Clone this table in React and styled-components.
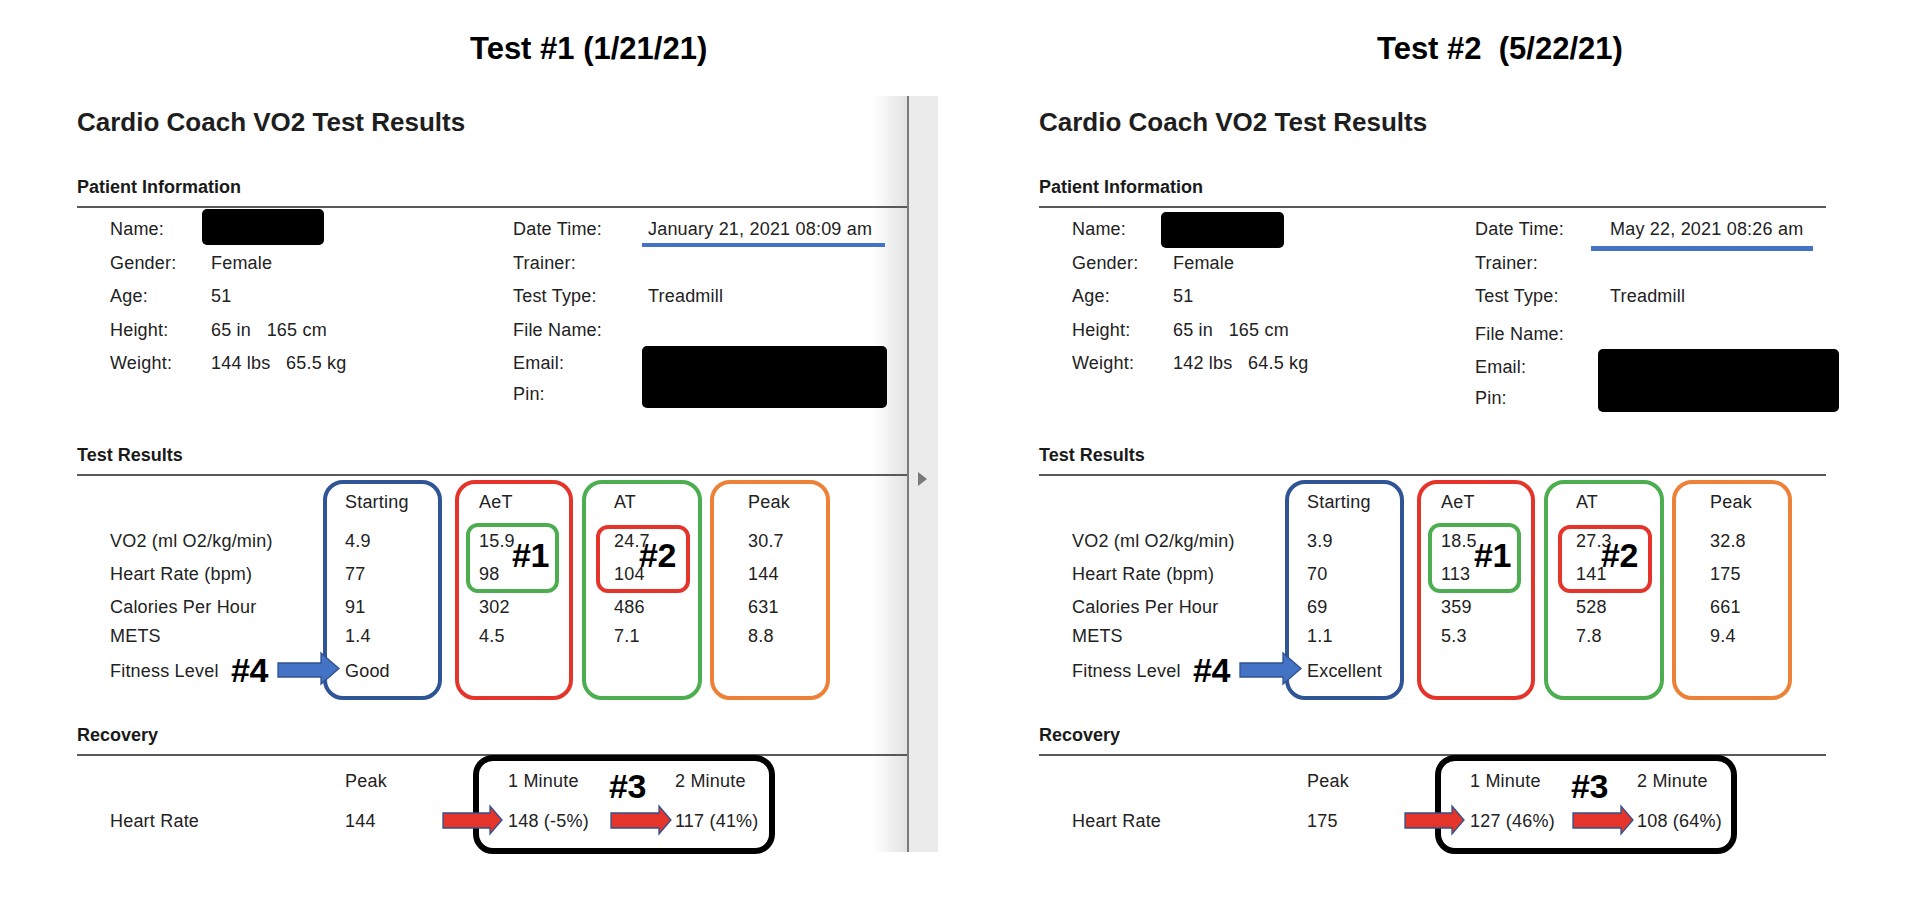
import React from "react";
import styled, { createGlobalStyle } from "styled-components";

const GlobalStyle = createGlobalStyle`
  html, body { margin: 0; padding: 0; background: #fff; }
  body { font-family: "Liberation Sans", Arial, Helvetica, sans-serif; color: #222; }
`;

const COLORS = {
  blue: "#2f5597",
  red: "#e5352b",
  green: "#4cae50",
  orange: "#ec8137",
  arrowBlue: "#4472c4",
  arrowRed: "#e5352b",
  outline: "#2f528f",
};

const ROW_LABELS = ["VO2 (ml O2/kg/min)", "Heart Rate (bpm)", "Calories Per Hour", "METS", "Fitness Level"];
const ROW_HEIGHTS = [39, 33, 33, 29, 35, 20];

const COLUMNS = [
  { key: "Starting", color: COLORS.blue, width: 119, pad: 18, gap: 0 },
  {
    key: "AeT", color: COLORS.red, width: 118, pad: 20, gap: 13,
    highlight: { color: COLORS.green, left: 7, top: 39, width: 93, height: 70, tag: "#1", tagLeft: 53, tagTop: 54 },
  },
  {
    key: "AT", color: COLORS.green, width: 120, pad: 28, gap: 9,
    highlight: { color: COLORS.red, left: 10, top: 41, width: 94, height: 68, tag: "#2", tagLeft: 53, tagTop: 54 },
  },
  { key: "Peak", color: COLORS.orange, width: 120, pad: 34, gap: 8 },
];

const TESTS = [
  {
    id: 1,
    title: "Test #1 (1/21/21)",
    titleIndent: 470,
    inset: 0,
    padLeft: 77,
    width: 830,
    shaded: true,
    scrollbar: true,
    patient: [
      { label: "Name:", redact: { left: -9, top: -4, width: 122, height: 36 } },
      { label: "Gender:", value: "Female" },
      { label: "Age:", value: "51" },
      { label: "Height:", value: "65 in   165 cm" },
      { label: "Weight:", value: "144 lbs   65.5 kg" },
    ],
    session: [
      { label: "Date Time:", value: "January 21, 2021 08:09 am", underline: { left: -6, top: 30, width: 243, height: 4 } },
      { label: "Trainer:" },
      { label: "Test Type:", value: "Treadmill" },
      { label: "File Name:" },
      { label: "Email:", redact: { left: -6, top: -1, width: 245, height: 62 } },
      { label: "Pin:", shift: -2.5 },
    ],
    results: {
      Starting: ["4.9", "77", "91", "1.4", "Good"],
      AeT: ["15.9", "98", "302", "4.5", ""],
      AT: ["24.7", "104", "486", "7.1", ""],
      Peak: ["30.7", "144", "631", "8.8", ""],
    },
    recovery: { peak: "144", one: "148 (-5%)", two: "117 (41%)" },
  },
  {
    id: 2,
    title: "Test #2  (5/22/21)",
    titleIndent: 417,
    inset: 79,
    padLeft: 0,
    width: 787,
    shaded: false,
    scrollbar: false,
    patient: [
      { label: "Name:", redact: { left: -12, top: -1, width: 123, height: 36 } },
      { label: "Gender:", value: "Female" },
      { label: "Age:", value: "51" },
      { label: "Height:", value: "65 in   165 cm" },
      { label: "Weight:", value: "142 lbs   64.5 kg" },
    ],
    session: [
      { label: "Date Time:", value: "May 22, 2021 08:26 am", underline: { left: -19, top: 33, width: 222, height: 5 } },
      { label: "Trainer:" },
      { label: "Test Type:", value: "Treadmill" },
      { label: "File Name:", shift: 4 },
      { label: "Email:", redact: { left: -12, top: -2, width: 241, height: 63 } },
      { label: "Pin:", shift: -2.5 },
    ],
    results: {
      Starting: ["3.9", "70", "69", "1.1", "Excellent"],
      AeT: ["18.5", "113", "359", "5.3", ""],
      AT: ["27.3", "141", "528", "7.8", ""],
      Peak: ["32.8", "175", "661", "9.4", ""],
    },
    recovery: { peak: "175", one: "127 (46%)", two: "108 (64%)" },
  },
];

/* ---------- page frame ---------- */

const Page = styled.main`
  display: flex;
  width: 1920px;
  height: 911px;
  overflow: hidden;
  background: #fff;
`;

const Panel = styled.section`
  flex: none;
  width: 960px;
  display: flex;
  flex-direction: column;
  padding-top: 31px;
  box-sizing: border-box;
`;

const SlideTitle = styled.h1`
  margin: 0 0 0 ${(p) => p.$indent}px;
  font: 700 31px/36px "Liberation Sans", Arial, sans-serif;
  color: #000;
  white-space: pre;
`;

const DocFrame = styled.div`
  display: flex;
  height: 756px;
  margin: 29px 0 0 ${(p) => p.$inset}px;
`;

const Doc = styled.article`
  flex: none;
  width: ${(p) => p.$width}px;
  padding: 11px 0 0 ${(p) => p.$padLeft}px;
  background: ${(p) =>
    p.$shaded ? "linear-gradient(to right, #fff calc(100% - 34px), #e2e2e2)" : "#fff"};
  color: #222;
`;

const ScrollStrip = styled.div`
  flex: none;
  width: 29px;
  border-left: 2px solid #7b7b7b;
  background: #ebebeb;
  padding-top: 376px;
`;

const ScrollArrow = styled.span`
  display: block;
  width: 0;
  height: 0;
  margin-left: 9px;
  border-left: 9px solid #7a7a7a;
  border-top: 7.5px solid transparent;
  border-bottom: 7.5px solid transparent;
`;

/* ---------- document text ---------- */

const DocTitle = styled.h2`
  margin: 0;
  font: 700 26px/30px "Liberation Sans", Arial, sans-serif;
  color: #1e1e1e;
`;

const SectionHeader = styled.h3`
  margin: ${(p) => p.$top}px 0 0;
  padding-bottom: 8px;
  border-bottom: 2px solid #595959;
  font: 700 18px/22px "Liberation Sans", Arial, sans-serif;
  color: #1a1a1a;
`;

const InfoBlock = styled.div`
  display: flex;
  height: 236px;
  box-sizing: border-box;
  padding-top: 5px;
`;

const InfoColumn = styled.div`
  display: flex;
  flex-direction: column;
  box-sizing: border-box;
  width: ${(p) => (p.$width ? `${p.$width}px` : "auto")};
  flex: ${(p) => (p.$width ? "none" : "1")};
  padding-left: ${(p) => p.$pad || 0}px;
`;

const InfoRow = styled.div`
  display: flex;
  height: 33.5px;
  line-height: 33.5px;
  margin-top: ${(p) => p.$shift || 0}px;
  font-size: 18px;
  letter-spacing: 0.2px;
`;

const InfoLabel = styled.span`
  flex: none;
  width: ${(p) => p.$width}px;
`;

const InfoValue = styled.span`
  position: relative;
  flex: 1;
  white-space: pre;
`;

const Redaction = styled.span`
  position: absolute;
  left: ${(p) => p.$left}px;
  top: ${(p) => p.$top}px;
  width: ${(p) => p.$width}px;
  height: ${(p) => p.$height}px;
  background: #000;
  border-radius: 5px;
`;

const DateUnderline = styled.span`
  position: absolute;
  left: ${(p) => p.$left}px;
  top: ${(p) => p.$top}px;
  width: ${(p) => p.$width}px;
  height: ${(p) => p.$height}px;
  background: ${COLORS.arrowBlue};
`;

/* ---------- results table ---------- */

const ResultsTable = styled.div`
  display: flex;
  align-items: flex-start;
`;

const LabelColumn = styled.div`
  flex: none;
  box-sizing: border-box;
  width: ${(p) => p.$width}px;
  padding: ${(p) => p.$top}px 0 0 33px;
`;

const ValueBox = styled.div`
  position: relative;
  flex: none;
  box-sizing: border-box;
  width: ${(p) => p.$width}px;
  height: 220px;
  margin: 4px 0 0 ${(p) => p.$gap}px;
  padding: 8px 0 0 ${(p) => p.$pad}px;
  border: 4px solid ${(p) => p.$color};
  border-radius: 20px;
`;

const Cell = styled.div`
  position: relative;
  height: ${(p) => p.$h}px;
  line-height: 20px;
  font-size: 18px;
  letter-spacing: 0.2px;
  white-space: pre;
`;

const Highlight = styled.span`
  position: absolute;
  left: ${(p) => p.$left}px;
  top: ${(p) => p.$top}px;
  width: ${(p) => p.$width}px;
  height: ${(p) => p.$height}px;
  box-sizing: border-box;
  border: 4px solid ${(p) => p.$color};
  border-radius: 12px;
`;

const Tag = styled.span`
  position: absolute;
  z-index: 3;
  left: ${(p) => p.$left}px;
  top: ${(p) => p.$top}px;
  font: 700 34px/34px "Liberation Sans", Arial, sans-serif;
  letter-spacing: -0.5px;
  color: #000;
  white-space: nowrap;
`;

const FitnessArrow = styled.svg`
  position: absolute;
  z-index: 3;
  left: 167px;
  top: -9px;
  overflow: visible;
`;

/* ---------- recovery ---------- */

const RecoveryTable = styled.div`
  display: flex;
  align-items: flex-start;
`;

const PeakColumn = styled.div`
  flex: none;
  width: 128px;
  padding-top: 15px;
`;

const ChangeBox = styled.div`
  position: relative;
  flex: none;
  display: flex;
  box-sizing: border-box;
  width: 302px;
  height: 99px;
  margin-top: -1px;
  padding-top: 10px;
  border: 6px solid #000;
  border-radius: 20px;
`;

const MinuteColumn = styled.div`
  flex: ${(p) => (p.$first ? "none" : "1")};
  box-sizing: border-box;
  width: ${(p) => (p.$first ? "196px" : "auto")};
  padding-left: ${(p) => (p.$first ? 29 : 0)}px;
`;

const RecoveryArrow = styled.svg`
  position: absolute;
  z-index: 3;
  left: ${(p) => p.$left}px;
  top: 44px;
  overflow: visible;
`;

function BlockArrow({ as: Comp, w, h, bodyTop, bodyBottom, headX, fill, ...rest }) {
  const d = `M1 ${bodyTop} H${headX} V1 L${w - 1} ${h / 2} L${headX} ${h - 1} V${bodyBottom} H1 Z`;
  return (
    <Comp width={w} height={h} viewBox={`0 0 ${w} ${h}`} {...rest}>
      <path d={d} fill={fill} stroke={COLORS.outline} strokeWidth="1.3" strokeLinejoin="miter" />
    </Comp>
  );
}

function TestDocument({ test }) {
  return (
    <DocFrame $inset={test.inset}>
      <Doc $width={test.width} $padLeft={test.padLeft} $shaded={test.shaded}>
        <DocTitle>Cardio Coach VO2 Test Results</DocTitle>

        <SectionHeader $top={39}>Patient Information</SectionHeader>
        <InfoBlock>
          <InfoColumn $width={436} $pad={33}>
            {test.patient.map((row) => (
              <InfoRow key={row.label} $shift={row.shift}>
                <InfoLabel $width={101}>{row.label}</InfoLabel>
                <InfoValue>
                  {row.value}
                  {row.redact && (
                    <Redaction
                      $left={row.redact.left}
                      $top={row.redact.top}
                      $width={row.redact.width}
                      $height={row.redact.height}
                    />
                  )}
                </InfoValue>
              </InfoRow>
            ))}
          </InfoColumn>
          <InfoColumn>
            {test.session.map((row) => (
              <InfoRow key={row.label} $shift={row.shift}>
                <InfoLabel $width={135}>{row.label}</InfoLabel>
                <InfoValue>
                  {row.value}
                  {row.underline && (
                    <DateUnderline
                      $left={row.underline.left}
                      $top={row.underline.top}
                      $width={row.underline.width}
                      $height={row.underline.height}
                    />
                  )}
                  {row.redact && (
                    <Redaction
                      $left={row.redact.left}
                      $top={row.redact.top}
                      $width={row.redact.width}
                      $height={row.redact.height}
                    />
                  )}
                </InfoValue>
              </InfoRow>
            ))}
          </InfoColumn>
        </InfoBlock>

        <SectionHeader $top={0}>Test Results</SectionHeader>
        <ResultsTable>
          <LabelColumn $width={246} $top={16}>
            <Cell $h={ROW_HEIGHTS[0]} />
            {ROW_LABELS.map((label, i) => (
              <Cell key={label} $h={ROW_HEIGHTS[i + 1]}>
                {label}
                {i === ROW_LABELS.length - 1 && (
                  <>
                    <Tag $left={121} $top={-8}>#4</Tag>
                    <BlockArrow
                      as={FitnessArrow}
                      w={63}
                      h={33}
                      bodyTop={11}
                      bodyBottom={25}
                      headX={44}
                      fill={COLORS.arrowBlue}
                    />
                  </>
                )}
              </Cell>
            ))}
          </LabelColumn>
          {COLUMNS.map((col) => (
            <ValueBox key={col.key} $width={col.width} $pad={col.pad} $gap={col.gap} $color={col.color}>
              <Cell $h={ROW_HEIGHTS[0]}>{col.key}</Cell>
              {test.results[col.key].map((v, i) => (
                <Cell key={i} $h={ROW_HEIGHTS[i + 1]}>{v}</Cell>
              ))}
              {col.highlight && (
                <>
                  <Highlight
                    $color={col.highlight.color}
                    $left={col.highlight.left}
                    $top={col.highlight.top}
                    $width={col.highlight.width}
                    $height={col.highlight.height}
                  />
                  <Tag $left={col.highlight.tagLeft} $top={col.highlight.tagTop}>
                    {col.highlight.tag}
                  </Tag>
                </>
              )}
            </ValueBox>
          ))}
        </ResultsTable>

        <SectionHeader $top={24}>Recovery</SectionHeader>
        <RecoveryTable>
          <LabelColumn $width={268} $top={15}>
            <Cell $h={40} />
            <Cell $h={20}>Heart Rate</Cell>
          </LabelColumn>
          <PeakColumn>
            <Cell $h={40}>Peak</Cell>
            <Cell $h={20}>{test.recovery.peak}</Cell>
          </PeakColumn>
          <ChangeBox>
            <MinuteColumn $first>
              <Cell $h={40}>1 Minute</Cell>
              <Cell $h={20}>{test.recovery.one}</Cell>
            </MinuteColumn>
            <MinuteColumn>
              <Cell $h={40}>2 Minute</Cell>
              <Cell $h={20}>{test.recovery.two}</Cell>
            </MinuteColumn>
            <Tag $left={130} $top={8}>#3</Tag>
            <BlockArrow
              as={RecoveryArrow}
              $left={-37}
              w={61}
              h={30}
              bodyTop={8}
              bodyBottom={23}
              headX={48}
              fill={COLORS.arrowRed}
            />
            <BlockArrow
              as={RecoveryArrow}
              $left={131}
              w={62}
              h={30}
              bodyTop={8}
              bodyBottom={23}
              headX={49}
              fill={COLORS.arrowRed}
            />
          </ChangeBox>
        </RecoveryTable>
      </Doc>
      {test.scrollbar && (
        <ScrollStrip>
          <ScrollArrow />
        </ScrollStrip>
      )}
    </DocFrame>
  );
}

export default function App() {
  return (
    <>
      <GlobalStyle />
      <Page>
        {TESTS.map((test) => (
          <Panel key={test.id}>
            <SlideTitle $indent={test.titleIndent}>{test.title}</SlideTitle>
            <TestDocument test={test} />
          </Panel>
        ))}
      </Page>
    </>
  );
}
